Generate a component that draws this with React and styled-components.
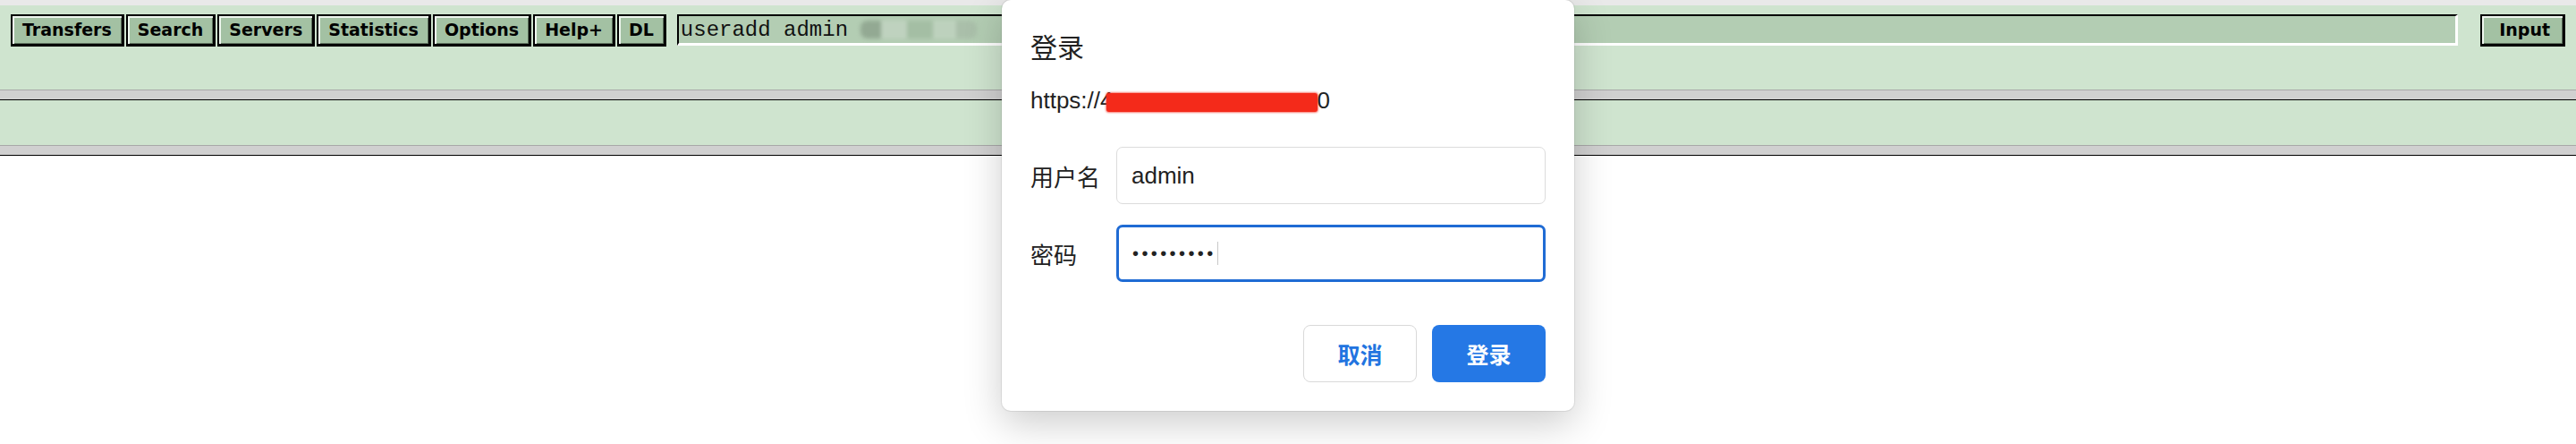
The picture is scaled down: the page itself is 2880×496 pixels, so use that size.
import styled, { createGlobalStyle } from "styled-components";

const GlobalStyle = createGlobalStyle`
  html, body {
    margin: 0;
    padding: 0;
    background: #fff;
  }
  body {
    font-family: "Liberation Sans", "Noto Sans CJK SC", sans-serif;
  }
`;

const Page = styled.div`
  position: relative;
  min-height: 496px;
  overflow: hidden;
`;

const TopStrip = styled.div`
  height: 6px;
  background: #e9e9e9;
`;

const Frame = styled.div`
  height: ${(p) => p.$height}px;
  background: #cfe4cf;
`;

const FrameBorder = styled.div`
  height: 10px;
  background: #d0d0d0;
  border-top: 1px solid #a8a8a8;
  border-bottom: 1px solid #000;
`;

const Toolbar = styled.div`
  display: flex;
  align-items: flex-start;
  gap: 2px;
  padding: 10px 12px 0;
`;

const NavButton = styled.button`
  height: 36px;
  box-sizing: border-box;
  padding: ${(p) => (p.$wide ? "0 14px 0 19px" : "0 11px")};
  margin: 0;
  background: #a3c1a3;
  color: #000;
  font-family: "DejaVu Sans", Verdana, sans-serif;
  font-weight: bold;
  font-size: 19px;
  line-height: 1;
  border: 2px solid #000;
  border-right-width: 3px;
  border-bottom-width: 3px;
  box-shadow: inset 2px 2px 0 #eef6ee, inset -1px -1px 0 #5f735f;
  cursor: pointer;
`;

const CommandField = styled.div`
  flex: 1;
  height: 35px;
  box-sizing: border-box;
  margin: 0 23px 0 10px;
  padding: 0 2px;
  display: flex;
  align-items: center;
  background: #b3cdb3;
  border-style: solid;
  border-width: 2px 3px 3px 2px;
  border-color: #000 #fff #fff #000;
  font-family: "Liberation Mono", "Courier New", monospace;
  font-size: 24px;
  color: #111;
  white-space: pre;
`;

const Blurred = styled.span`
  display: inline-block;
  width: 130px;
  height: 20px;
  border-radius: 8px;
  background: linear-gradient(
    90deg,
    #93a993 0 18%,
    #bfd2bf 18% 40%,
    #a4bea4 40% 62%,
    #bdd1bd 62% 82%,
    #aabfaa 82% 100%
  );
  filter: blur(2px);
`;

const Dialog = styled.div`
  position: absolute;
  top: 0;
  left: 50%;
  transform: translateX(-50%);
  width: 640px;
  box-sizing: border-box;
  padding: 36px 32px 32px;
  background: #fff;
  border-radius: 10px;
  box-shadow: 0 14px 44px rgba(0, 0, 0, 0.2), 0 0 0 1px rgba(0, 0, 0, 0.07);
  color: #222;
`;

const Title = styled.h2`
  margin: 0;
  font-size: 30px;
  line-height: 36px;
  font-weight: normal;
`;

const Url = styled.div`
  margin-top: 25px;
  font-size: 26px;
  line-height: 30px;
  white-space: nowrap;
`;

const Redacted = styled.span`
  display: inline-block;
  width: 236px;
  height: 21px;
  margin-left: -8px;
  vertical-align: -4px;
  background: #f42a1a;
  border-radius: 3px;
  box-shadow: 0 0 2px 1px rgba(244, 42, 26, 0.6);
`;

const Form = styled.div`
  display: grid;
  grid-template-columns: 96px 1fr;
  row-gap: 23px;
  align-items: center;
  margin-top: 37px;
`;

const Label = styled.label`
  font-size: 26px;
`;

const Field = styled.div`
  height: 64px;
  box-sizing: border-box;
  display: flex;
  align-items: center;
  padding-left: ${(p) => (p.$focused ? 15 : 16)}px;
  border: ${(p) => (p.$focused ? "3px solid #1f6bd4" : "1px solid #dcdcdc")};
  border-radius: 7px;
  font-size: 26px;
`;

const Dots = styled.span`
  font-size: 20px;
  letter-spacing: 3.4px;
`;

const Caret = styled.span`
  width: 1px;
  height: 26px;
  margin-left: 1px;
  background: #c8c8c8;
`;

const Actions = styled.div`
  display: flex;
  justify-content: flex-end;
  gap: 17px;
  margin-top: 48px;
`;

const ActionButton = styled.button`
  width: 127px;
  height: 64px;
  box-sizing: border-box;
  border-radius: 8px;
  font-family: "Liberation Sans", "Noto Sans CJK SC", sans-serif;
  font-size: 25px;
  font-weight: bold;
  cursor: pointer;
  background: ${(p) => (p.$primary ? "#2578e5" : "#fff")};
  color: ${(p) => (p.$primary ? "#fff" : "#2274e0")};
  border: ${(p) => (p.$primary ? "none" : "1px solid #d9d9d9")};
`;

const tabs = ["Transfers", "Search", "Servers", "Statistics", "Options", "Help+", "DL"];

export default function App() {
  return (
    <Page>
      <GlobalStyle />
      <TopStrip />
      <Frame $height={94}>
        <Toolbar>
          {tabs.map((t) => (
            <NavButton key={t}>{t}</NavButton>
          ))}
          <CommandField>
            useradd admin <Blurred />
          </CommandField>
          <NavButton $wide>Input</NavButton>
        </Toolbar>
      </Frame>
      <FrameBorder />
      <Frame $height={50} />
      <FrameBorder />

      <Dialog>
        <Title>登录</Title>
        <Url>
          https://4<Redacted />0
        </Url>
        <Form>
          <Label>用户名</Label>
          <Field>admin</Field>
          <Label>密码</Label>
          <Field $focused>
            <Dots>•••••••••</Dots>
            <Caret />
          </Field>
        </Form>
        <Actions>
          <ActionButton>取消</ActionButton>
          <ActionButton $primary>登录</ActionButton>
        </Actions>
      </Dialog>
    </Page>
  );
}
